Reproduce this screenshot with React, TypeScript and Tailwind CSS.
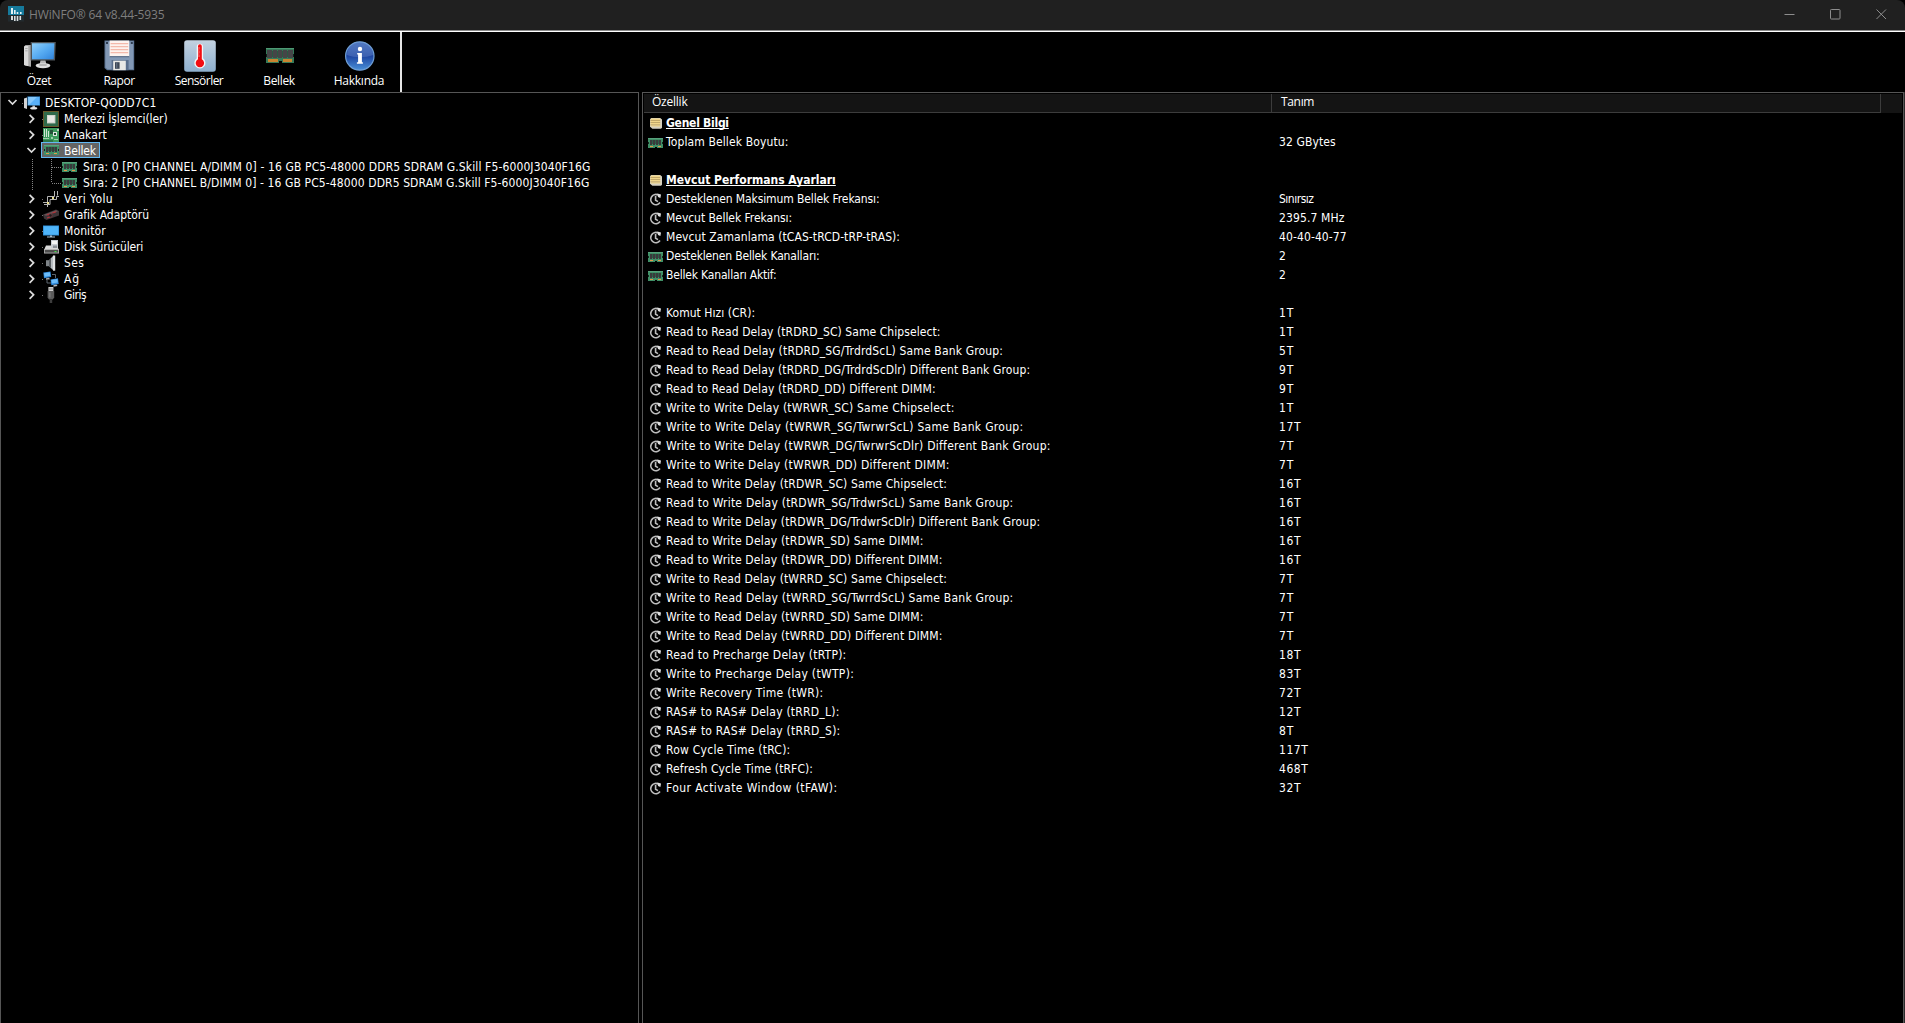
import { useLayoutEffect, useRef, useState } from 'react';
import type { ReactNode } from 'react';

type IconKind = 'pc' | 'cpu' | 'board' | 'ram' | 'bus' | 'gpu' | 'monitor' | 'disk' | 'sound' | 'net' | 'usb' | 'book' | 'clock';

// Spreads the letters so that the label takes the given width in pixels.
function Label({ w, className = '', children }: { w: number; className?: string; children: string }) {
  const ref = useRef<HTMLSpanElement>(null);
  const [spacing, setSpacing] = useState(0);
  useLayoutEffect(() => {
    const natural = ref.current!.getBoundingClientRect().width;
    setSpacing((w + 0.8 - natural) / children.length);
  }, [w, children]);
  return (
    <span ref={ref} className={'whitespace-nowrap ' + className} style={{ letterSpacing: spacing }}>
      {children}
    </span>
  );
}

function RamIcon() {
  return (
    <svg width="15" height="10" viewBox="0 0 15 10" shapeRendering="crispEdges">
      <path d="M0 0h15v10H9V9H7v1H0z" fill="#3f8f66" />
      <path d="M0 0h15v1H0z" fill="#58a27c" />
      <path d="M2 2h2v5H2zM5 2h2v5H5zM8 2h2v5H8zM11 2h2v5h-2z" fill="#3a3a3c" />
      <path d="M4 2h1v4H4zM7 2h1v4H7zM10 2h1v4h-1z" fill="#2c5f47" />
      <path d="M2 8h3v1H2zM10 8h3v1h-3z" fill="#e09a4c" />
      <path d="M0 4h1v2H0zM14 4h1v2h-1z" fill="#14261d" />
    </svg>
  );
}

function SmallIcon({ kind }: { kind: IconKind }) {
  switch (kind) {
    case 'ram':
      return <RamIcon />;
    case 'clock':
      return (
        <svg width="13" height="13" viewBox="0 0 13 13" fill="none" stroke="#bdbdbd">
          <path d="M11 9.6A5.1 5.1 0 1 1 9 1.9" strokeWidth="1.7" />
          <path d="M6.6 3v4.2l2.4 1.4" strokeWidth="1.6" />
          <path d="M8.3.6L12 1.4 11.4 5 9 4z" fill="#dedede" stroke="none" />
        </svg>
      );
    case 'book':
      return (
        <svg width="12" height="11" viewBox="0 0 12 11">
          <path d="M1.2 0h9L12 1.4v8.3l-1 1.1H2.4L0 8.8V1.4z" fill="#d5d1c2" />
          <path d="M.8.4h9.4v1.5H.6zM.4 2.7h9.8v1.5H.4zM.4 5h9.8v1.4H.4zM.6 7.2h9.8v1.3H.8z" fill="#f0d68a" />
          <path d="M.4 1.9h9.8v.8H.4zM.4 4.2h9.8V5H.4zM.4 6.4h9.8v.8H.4z" fill="#b99a52" />
        </svg>
      );
    case 'pc':
      return (
        <svg width="16" height="14" viewBox="0 0 16 14">
          <path d="M0 2.5l3-1V13l-3-1z" fill="#d4d4d4" />
          <path d="M3.4.4H16v9.2H3.4z" fill="#3886c6" />
          <path d="M4.2 1H15.4v8H4.2z" fill="#59b0f7" />
          <path d="M4.2 1H13L5 9h-.8z" fill="#86c8fb" />
          <path d="M8.4 9.6h2.6v2H8.4z" fill="#b8b8b8" />
          <ellipse cx="9.7" cy="12.2" rx="3.6" ry="1.3" fill="#e6e6e6" />
        </svg>
      );
    case 'cpu':
      return (
        <svg width="16" height="16" viewBox="0 0 16 16">
          <path d="M.5.5h15v15H.5z" fill="none" stroke="#cfae52" strokeDasharray="1 1" />
          <path d="M1 1h14v14H1z" fill="#2f6a4a" />
          <path d="M4 4h8.4v8.4H4z" fill="#d3d6ce" />
          <path d="M5 5h6v6H5z" fill="#e7e8e3" />
        </svg>
      );
    case 'board':
      return (
        <svg width="16" height="14" viewBox="0 0 16 14" shapeRendering="crispEdges">
          <path d="M0 0h16v14H0z" fill="#3c9a5c" />
          <path d="M1 1h1v8H1zM3 1h1v8H3zM5 3h1v6H5z" fill="#cfe6d4" />
          <path d="M7 2h3v4H7z" fill="#24543a" />
          <path d="M10 4h4v4h-4z" fill="#dfe5df" />
          <path d="M11 5h2v2h-2z" fill="#1e4a31" />
          <path d="M0 10h6v1H0zM8 9h2v2H8zM11 11h4v1h-4z" fill="#9dd0aa" />
          <path d="M0 12h10v2H0z" fill="#2a7546" />
          <path d="M14 1h2v2h-2z" fill="#b8c9b9" />
        </svg>
      );
    case 'bus':
      return (
        <svg width="16" height="16" viewBox="0 0 16 16" fill="none">
          <path d="M0 11.5h4.5v-6h7V0M1 13.5h6v-5h6.5v-3H16M4.5 16v-4M14.5 0v4.5" stroke="#b5b5b5" />
          <path d="M4 11h2v2H4zM9 6h2v2H9z" fill="#e8dc8c" />
        </svg>
      );
    case 'gpu':
      return (
        <svg width="16" height="12" viewBox="0 0 16 12">
          <path d="M0 5.5L13 .5l3 1.5v4.5L3.5 11 1 9.5z" fill="#3c3538" />
          <path d="M1 5.8L13 1.2l2 1L3 6.8z" fill="#6a5558" />
          <path d="M4 6l2.5-1M9.5 4L13 2.7M4 9l3-1" stroke="#b82f36" strokeWidth="1.2" />
          <circle cx="7.5" cy="6.5" r="1.7" fill="#1e1b1d" stroke="#7c3a3f" strokeWidth=".7" />
        </svg>
      );
    case 'monitor':
      return (
        <svg width="16" height="13" viewBox="0 0 16 13">
          <path d="M0 .5h16v10H0z" fill="#2f8fd8" />
          <path d="M.8 1.2h14.4v8.5H.8z" fill="#4fb5fa" />
          <path d="M7 10.5h2v1H7zM4 11.5h8v1H4z" fill="#a8bfd0" />
        </svg>
      );
    case 'disk':
      return (
        <svg width="15" height="14" viewBox="0 0 15 14">
          <path d="M7 0h7v8H7z" fill="#c8ccd2" />
          <path d="M8 1h5v3H8z" fill="#f4f4f4" />
          <path d="M9 5.5h4V8H9z" fill="#8b9097" />
          <path d="M2 5.5h5V8h7l1 2H0z" fill="#d9d9d9" />
          <path d="M0 9h15v4.5H0z" fill="#b4b4b4" />
          <path d="M.8 10h13.4v2.6H.8z" fill="#4e4e4e" />
          <path d="M10.5 11h2v1h-2z" fill="#45e04d" />
        </svg>
      );
    case 'sound':
      return (
        <svg width="16" height="16" viewBox="0 0 16 16">
          <path d="M3 5.2h3v6H3z" fill="#7e8488" />
          <path d="M6 5.2L10.5.6v15L6 11.2z" fill="#b6bbbf" />
          <path d="M10 .5h2.2v15.2H10z" fill="#dfe2e4" />
          <path d="M6 5.2L8 3.2v10L6 11.2z" fill="#575c60" />
        </svg>
      );
    case 'net':
      return (
        <svg width="16" height="16" viewBox="0 0 16 16">
          <path d="M9 3.5h3.5V7M4 9v3h4" stroke="#5c6670" fill="none" />
          <path d="M.3 1.6L7.5.4 8.2 6 1 7.2z" fill="#2f88d8" />
          <path d="M1 2.2l5.8-1 .5 3.6L1.6 5.8z" fill="#6cbcf8" />
          <path d="M3 7.2l3-.5 1 1.5-4 .6z" fill="#a5a9ad" />
          <path d="M7.5 8.4l7.5-1.2.7 5.8-7.3 1.2z" fill="#2f88d8" />
          <path d="M8.3 9l6-1 .5 3.6-5.9 1z" fill="#6cbcf8" />
          <path d="M10.5 14l3-.5 1 1.6-4 .6z" fill="#b5b9bd" />
        </svg>
      );
    case 'usb':
      return (
        <svg width="16" height="16" viewBox="0 0 16 16">
          <path d="M5.4 0h5v4.5h-5z" fill="#cfcfcf" />
          <path d="M6.5 1.4h1v1h-1zM8.5 1.4h1v1h-1z" fill="#4a4a4a" />
          <path d="M4.6 4h6.6v6.5l-1.4 2H6l-1.4-2z" fill="#5b5b5b" />
          <path d="M6.4 5.5h1v5h-1z" fill="#858585" />
          <path d="M6.7 12.5h2.5V16H6.7z" fill="#3d3d3d" />
        </svg>
      );
  }
}

const toolbar: { name: string; w: number; icon: ReactNode }[] = [
  {
    name: 'Özet',
    w: 23.7,
    icon: (
      <svg width="32" height="32" viewBox="0 0 32 32">
        <defs>
          <linearGradient id="screen" x1="0" y1="0" x2="1" y2="1">
            <stop offset="0" stopColor="#8fd0fb" />
            <stop offset=".5" stopColor="#58acf2" />
            <stop offset="1" stopColor="#2f83dc" />
          </linearGradient>
        </defs>
        <path d="M0 6.5l1.5-1.2H7v21.2l-5.5-.8L0 25z" fill="#d9d9d9" />
        <path d="M4.3 5.3H7v21.2l-2.7-.4z" fill="#a9a9a9" />
        <path d="M1.2 8h2.4v.8H1.2zM1.2 10.5h2.4v.8H1.2z" fill="#9a9a9a" />
        <path d="M6.6 2h25.2l-.8 18.6H6.6z" fill="#4e5458" />
        <path d="M8 3.3h22.4l-.7 16H8z" fill="url(#screen)" />
        <path d="M16.5 20.6h5l1 4.2h-7z" fill="#b9b9b9" />
        <ellipse cx="19" cy="25.6" rx="7.4" ry="2.6" fill="#dedede" />
        <ellipse cx="19" cy="24.9" rx="4" ry="1.2" fill="#b5b5b5" />
      </svg>
    ),
  },
  {
    name: 'Rapor',
    w: 30.3,
    icon: (
      <svg width="32" height="32" viewBox="0 0 32 32">
        <path d="M.5.5h29.7v29.7H3L.5 28z" fill="#5c7493" />
        <path d="M1.5 1.5h27.7v27.7H3.6L1.5 27.4z" fill="#8298b5" />
        <path d="M2 2h2v2H2zM26.8 2h2v2h-2z" fill="#2e3c50" />
        <path d="M5.6.5h19.6v16H5.6z" fill="#fdf3ef" />
        <path d="M6.6 3h17.6v1.3H6.6zM6.6 6h17.6v1.3H6.6zM6.6 9h17.6v1.3H6.6zM6.6 12h17.6v1.3H6.6z" fill="#f3b9ab" />
        <path d="M5.6 16.2h19.6v1H5.6z" fill="#4c617e" />
        <path d="M7.6 20h17v10.2h-17z" fill="#5a6f8c" />
        <path d="M9.2 20.7h12.6v9.5H9.2z" fill="#e9e9e6" />
        <path d="M11 22.2h4.6v6.6H11z" fill="#3d4756" />
        <path d="M12 22.2h1.4v6.6H12z" fill="#5f6b7c" />
      </svg>
    ),
  },
  {
    name: 'Sensörler',
    w: 47.7,
    icon: (
      <svg width="32" height="32" viewBox="0 0 32 32">
        <defs>
          <linearGradient id="plate" x1="0" y1="0" x2="0" y2="1">
            <stop offset="0" stopColor="#c3d2e0" />
            <stop offset="1" stopColor="#8eb0cf" />
          </linearGradient>
        </defs>
        <rect x=".2" y=".2" width="31.6" height="31.6" rx="2.8" fill="url(#plate)" />
        <path d="M12.7 7a3.2 3.2 0 0 1 6.4 0v11.2a5.6 5.6 0 1 1-6.4 0z" fill="#f4f6f8" />
        <path d="M14 6.2a1.9 1.9 0 0 1 3.8 0v13.1a4.2 4.2 0 1 1-3.8 0z" fill="#f20d12" />
        <path d="M14 8h2M14 10h1.5M14 12h2M14 14h1.5M14 16h2" stroke="#fbb0b0" strokeWidth=".7" />
      </svg>
    ),
  },
  {
    name: 'Bellek',
    w: 30.7,
    icon: (
      <svg width="28" height="32" viewBox="0 0 28 32" shapeRendering="crispEdges">
        <path d="M0 8h28v15H16v-2h-3v2H0z" fill="#357a58" />
        <path d="M0 8h28v1H0z" fill="#4e9974" />
        <path d="M1 10h5v8H1zM7 10h4v8H7zM12 10h4v8h-4zM17 10h4v8h-4zM22 10h5v8h-5z" fill="#454547" />
        <path d="M6 11h1v6H6zM11 11h1v6h-1zM16 11h1v6h-1zM21 11h1v6h-1z" fill="#2a5842" />
        <path d="M2 19h10v3H2zM17 19h9v3h-9z" fill="#c98430" />
        <path d="M0 14h1v3H0zM27 14h1v3h-1z" fill="#0f2018" />
      </svg>
    ),
  },
  {
    name: 'Hakkında',
    w: 49.7,
    icon: (
      <svg width="32" height="32" viewBox="0 0 32 32">
        <defs>
          <linearGradient id="ball" x1="0" y1="0" x2="0" y2="1">
            <stop offset="0" stopColor="#3e68b8" />
            <stop offset=".5" stopColor="#1d44a0" />
            <stop offset="1" stopColor="#4a90d8" />
          </linearGradient>
        </defs>
        <circle cx="15.8" cy="16" r="14.2" fill="url(#ball)" stroke="#6f9fd6" strokeWidth="1.2" />
        <path d="M3 15a13 13 0 0 1 26 0c-8 3-18 3-26 0z" fill="#7b9bd4" opacity=".35" />
        <circle cx="16" cy="9" r="2.2" fill="#fff" />
        <path d="M13.2 13h4.7v9.2h1v1.6h-6v-1.6h1.2v-7.6h-.9z" fill="#fff" />
      </svg>
    ),
  },
];

const tree: { icon: IconKind; text: string; w: number; open?: boolean; children?: [string, number][] }[] = [
  { icon: 'cpu', text: 'Merkezi İşlemci(ler)', w: 102.7 },
  { icon: 'board', text: 'Anakart', w: 42 },
  {
    icon: 'ram',
    text: 'Bellek',
    w: 31,
    open: true,
    children: [
      ['Sıra: 0 [P0 CHANNEL A/DIMM 0] - 16 GB PC5-48000 DDR5 SDRAM G.Skill F5-6000J3040F16G', 506.6],
      ['Sıra: 2 [P0 CHANNEL B/DIMM 0] - 16 GB PC5-48000 DDR5 SDRAM G.Skill F5-6000J3040F16G', 505.6],
    ],
  },
  { icon: 'bus', text: 'Veri Yolu', w: 48.3 },
  { icon: 'gpu', text: 'Grafik Adaptörü', w: 84.3 },
  { icon: 'monitor', text: 'Monitör', w: 41 },
  { icon: 'disk', text: 'Disk Sürücüleri', w: 78.3 },
  { icon: 'sound', text: 'Ses', w: 19.3 },
  { icon: 'net', text: 'Ağ', w: 15 },
  { icon: 'usb', text: 'Giriş', w: 21.3 },
];

type Row = [IconKind, string, number, string?, number?] | null;

const rows: Row[] = [
  ['book', 'Genel Bilgi', 62],
  ['ram', 'Toplam Bellek Boyutu:', 121.7, '32 GBytes', 56],
  null,
  ['book', 'Mevcut Performans Ayarları', 169],
  ['clock', 'Desteklenen Maksimum Bellek Frekansı:', 212.7, 'Sınırsız', 33.7],
  ['clock', 'Mevcut Bellek Frekansı:', 125.3, '2395.7 MHz', 64.7],
  ['clock', 'Mevcut Zamanlama (tCAS-tRCD-tRP-tRAS):', 233.3, '40-40-40-77', 67],
  ['ram', 'Desteklenen Bellek Kanalları:', 152.7, '2', 6.5],
  ['ram', 'Bellek Kanalları Aktif:', 109.7, '2', 6.5],
  null,
  ['clock', 'Komut Hızı (CR):', 88.3, '1T', 14.5],
  ['clock', 'Read to Read Delay (tRDRD_SC) Same Chipselect:', 273.7, '1T', 14.5],
  ['clock', 'Read to Read Delay (tRDRD_SG/TrdrdScL) Same Bank Group:', 336.3, '5T', 14.5],
  ['clock', 'Read to Read Delay (tRDRD_DG/TrdrdScDlr) Different Bank Group:', 363.3, '9T', 14.5],
  ['clock', 'Read to Read Delay (tRDRD_DD) Different DIMM:', 268.7, '9T', 14.5],
  ['clock', 'Write to Write Delay (tWRWR_SC) Same Chipselect:', 287.7, '1T', 14.5],
  ['clock', 'Write to Write Delay (tWRWR_SG/TwrwrScL) Same Bank Group:', 356.7, '17T', 21.5],
  ['clock', 'Write to Write Delay (tWRWR_DG/TwrwrScDlr) Different Bank Group:', 383.7, '7T', 14.5],
  ['clock', 'Write to Write Delay (tWRWR_DD) Different DIMM:', 282.7, '7T', 14.5],
  ['clock', 'Read to Write Delay (tRDWR_SC) Same Chipselect:', 280.3, '16T', 21.5],
  ['clock', 'Read to Write Delay (tRDWR_SG/TrdwrScL) Same Bank Group:', 346.7, '16T', 21.5],
  ['clock', 'Read to Write Delay (tRDWR_DG/TrdwrScDlr) Different Bank Group:', 373.3, '16T', 21.5],
  ['clock', 'Read to Write Delay (tRDWR_SD) Same DIMM:', 256.7, '16T', 21.5],
  ['clock', 'Read to Write Delay (tRDWR_DD) Different DIMM:', 275.7, '16T', 21.5],
  ['clock', 'Write to Read Delay (tWRRD_SC) Same Chipselect:', 280.3, '7T', 14.5],
  ['clock', 'Write to Read Delay (tWRRD_SG/TwrrdScL) Same Bank Group:', 346.7, '7T', 14.5],
  ['clock', 'Write to Read Delay (tWRRD_SD) Same DIMM:', 256.7, '7T', 14.5],
  ['clock', 'Write to Read Delay (tWRRD_DD) Different DIMM:', 275.7, '7T', 14.5],
  ['clock', 'Read to Precharge Delay (tRTP):', 179.7, '18T', 21.5],
  ['clock', 'Write to Precharge Delay (tWTP):', 187.3, '83T', 21.5],
  ['clock', 'Write Recovery Time (tWR):', 156.7, '72T', 21.5],
  ['clock', 'RAS# to RAS# Delay (tRRD_L):', 172.7, '12T', 21.5],
  ['clock', 'RAS# to RAS# Delay (tRRD_S):', 173.7, '8T', 14.5],
  ['clock', 'Row Cycle Time (tRC):', 123.7, '117T', 28.5],
  ['clock', 'Refresh Cycle Time (tRFC):', 146.3, '468T', 28.5],
  ['clock', 'Four Activate Window (tFAW):', 170.7, '32T', 21.5],
];

function Chevron({ open }: { open?: boolean }) {
  return (
    <svg width="16" height="16" viewBox="0 0 16 16" fill="none" stroke="#dcdcdc" strokeWidth="1.7">
      {open ? <path d="M3.5 5l4 4 4-4" /> : <path d="M5.6 3.8l4 4-4 4" />}
    </svg>
  );
}

function TitleBar() {
  return (
    <header className="flex h-[30px] shrink-0 items-center rounded-t-lg bg-[#202020] pl-2 text-[#7e7e7e]">
      <svg width="16" height="16" viewBox="0 0 16 16" className="-mt-[3px]">
        <path d="M0 0h16v9H0z" fill="#167a9c" />
        <path d="M0 9h16v6.5H0z" fill="#222a2e" />
        <path d="M3 2h2v6H3zM6 4h1.6v4H6zM8.7 6h1.6v2H8.7zM12 6h1.6v2H12z" fill="#e4f1f5" />
        <path d="M3 10h2v4H3zM6 10h1.6v5H6zM8.7 10h1.6v5H8.7zM11.5 10h1.6v4h-1.6z" fill="#d8dcde" />
      </svg>
      <Label w={134.7} className="ml-[5px] text-[12px] font-['Open_Sans',sans-serif]">HWiNFO® 64 v8.44-5935</Label>
      <div className="-mt-[2px] ml-auto flex gap-[35px] pr-[18px]">
        <svg width="11" height="11" viewBox="0 0 11 11" stroke="#8d8d8d"><path d="M.5 5.5h10" /></svg>
        <svg width="11" height="11" viewBox="0 0 11 11" fill="none" stroke="#8d8d8d"><rect x=".5" y=".5" width="9.5" height="9.5" rx=".8" /></svg>
        <svg width="11" height="11" viewBox="0 0 11 11" stroke="#8d8d8d"><path d="M.5.5l9.5 9.5M10 .5L.5 10" /></svg>
      </div>
    </header>
  );
}

function Toolbar() {
  return (
    <div className="flex h-[60px] w-[402px] shrink-0 border-r-2 border-[#e6e6e6]">
      {toolbar.map((b) => (
        <button key={b.name} className="flex w-20 flex-col items-center pt-2">
          {b.icon}
          <Label w={b.w} className="mt-px mr-[2px] text-[12px] leading-4 font-['Open_Sans',sans-serif]">{b.name}</Label>
        </button>
      ))}
    </div>
  );
}

function Tree() {
  return (
    <div className="w-[639px] border border-b-0 border-[#565656] pt-0.5">
      <div className="flex h-4 items-center pl-1">
        <Chevron open />
        <span className="mx-px w-px border-t border-dotted border-[#777]" />
        <SmallIcon kind="pc" />
        <Label w={110.7} className="ml-[5px]">DESKTOP-QODD7C1</Label>
      </div>
      {tree.map((n) => (
        <div key={n.text}>
          <div className="flex h-4 items-center pl-[23px]">
            <Chevron open={n.open} />
            <div
              className={
                'ml-px flex h-4 items-center border pr-[3px] ' +
                (n.open ? '-mt-0.5 border-[#62b8f2] bg-[#646464]' : 'border-transparent')
              }
            >
              <span className="w-px border-t border-dotted border-[#777]" />
              <span className="flex w-4 justify-center"><SmallIcon kind={n.icon} /></span>
              <Label w={n.w} className={n.open ? 'relative top-px ml-[5px]' : 'ml-[5px]'}>{n.text}</Label>
            </div>
          </div>
          {n.children?.map(([text, w], i) => (
            <div key={text} className="flex h-4 items-center pl-[23px]">
              <svg width="38" height="16" viewBox="0 0 38 16" stroke="#858585" strokeDasharray="1 1">
                <path d="M8.5 0v16" />
                <path d={i === 0 ? 'M27.5 0v16' : 'M27.5 0v8'} />
                <path d="M28 8.5h10" />
              </svg>
              <SmallIcon kind="ram" />
              <Label w={w} className="ml-1.5">{text}</Label>
            </div>
          ))}
        </div>
      ))}
    </div>
  );
}

function Details() {
  return (
    <div className="ml-[3px] w-[1262px] border border-b-0 border-[#565656] px-px pt-px">
      <div className="mb-px flex h-[19px] bg-[#141414] leading-[16px] font-['Open_Sans',sans-serif]">
        <div className="w-[628px] border-r border-b border-[#3c3c3c] pl-2"><Label w={34.7}>Özellik</Label></div>
        <div className="w-[609px] border-r border-b border-[#3c3c3c] pl-[9px]"><Label w={32.3}>Tanım</Label></div>
      </div>
      {rows.map((r, i) =>
        r ? (
          <div key={i} className="flex h-[19px] items-center pl-1 leading-[19px]">
            <span className="flex w-[15px] justify-center"><SmallIcon kind={r[0]} /></span>
            <span className="w-[616px] pl-[3px]">
              <Label w={r[2]} className={r[3] ? '' : 'font-bold underline underline-offset-1 [text-decoration-skip-ink:none]'}>{r[1]}</Label>
            </span>
            {r[3] && <Label w={r[4]!}>{r[3]}</Label>}
          </div>
        ) : (
          <div key={i} className="h-[19px]" />
        ),
      )}
    </div>
  );
}

export default function App() {
  return (
    <div className="flex h-[1023px] w-[1905px] flex-col overflow-hidden bg-black text-[12px] text-white font-['DejaVu_Sans_Condensed','DejaVu_Sans',sans-serif]">
      <TitleBar />
      <div className="h-0.5 shrink-0 border-t border-[#8c8c8c] bg-white" />
      <Toolbar />
      <main className="flex grow">
        <Tree />
        <Details />
        <div className="w-px bg-[#2a2a2a]" />
      </main>
    </div>
  );
}
